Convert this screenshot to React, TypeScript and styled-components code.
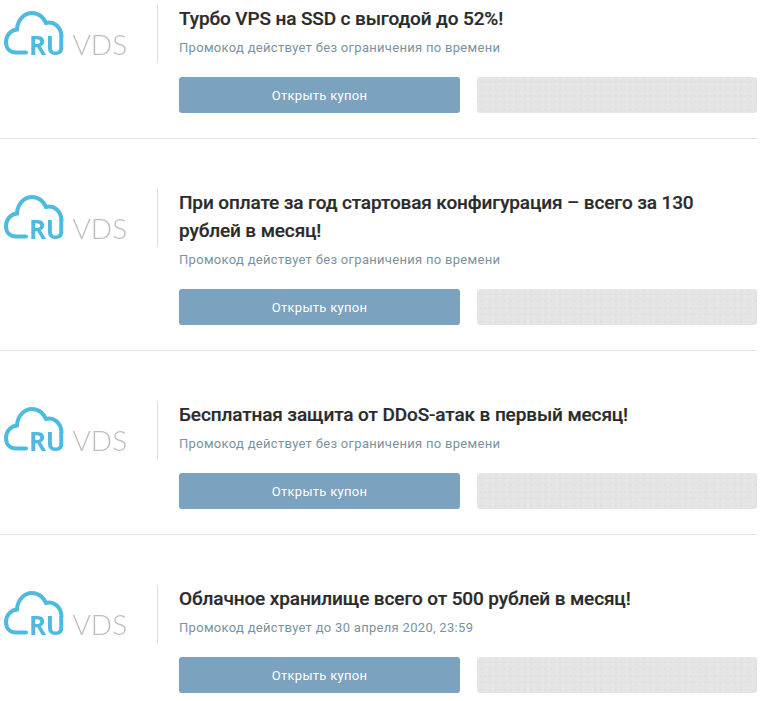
import React from "react";
import styled, { createGlobalStyle } from "styled-components";

const Global = createGlobalStyle`
  html, body { margin: 0; padding: 0; background: #fff; }
  body { font-family: Roboto, "Noto Sans", sans-serif; overflow: hidden; }
`;

const List = styled.div`
  width: 757px;
  padding-top: 5px;
`;

const Row = styled.article<{ $first?: boolean }>`
  display: flex;
  padding: ${(p) => (p.$first ? "0" : "50px")} 0 25px;
  border-bottom: 1px solid #dfe5e5;
  &:last-child { border-bottom: none; }
`;

const LogoCol = styled.div`
  flex: 0 0 158px;
  box-sizing: border-box;
  height: 58px;
  border-right: 1px solid #dcdcdc;
`;

const LogoSvg = styled.svg`
  display: block;
  width: 130px;
  height: 58px;
  filter: blur(0.4px);
`;

const Content = styled.div`
  flex: 1;
  margin-left: 21px;
  min-width: 0;
`;

const Title = styled.h2`
  margin: 0;
  font-size: 19px;
  line-height: 28px;
  font-weight: 500;
  letter-spacing: -0.12px;
  color: #2b2b2b;
  -webkit-text-stroke: 0.2px #2b2b2b;
`;

const Note = styled.p`
  margin: 5px 0 0;
  font-size: 13px;
  line-height: 20px;
  letter-spacing: 0.3px;
  color: #7b929f;
`;

const Actions = styled.div`
  display: flex;
  gap: 17px;
  margin-top: 19px;
`;

const OpenButton = styled.button`
  flex: 0 0 281px;
  height: 36px;
  padding: 1px 0 0;
  border: none;
  border-radius: 3px;
  background: #7ba2be;
  color: #fff;
  font-family: inherit;
  font-size: 13px;
  letter-spacing: 0.3px;
`;

const Coupon = styled.div`
  flex: 1;
  height: 36px;
  border-radius: 3px;
  background-color: #e4e4e4;
  background-image:
    radial-gradient(circle at 30% 40%, rgba(255,255,255,.12) 0 1px, transparent 2px),
    radial-gradient(circle at 70% 70%, rgba(0,0,0,.012) 0 1px, transparent 2px);
  background-size: 7px 5px, 5px 7px;
`;

const Logo = () => (
  <LogoSvg viewBox="0 0 130 58">
    <path
      d="M26 47.5 H16 C9 47.5 6 42.5 6 37 C6 30 11 25 17 24.5 C17.5 14 25 8 32 8 C39 8 44 13 46 18 C54 16 61 22 61.5 31"
      fill="none"
      stroke="#4fbadf"
      strokeWidth="4"
      strokeLinecap="round"
    />
    <text x="29" y="49.5" fontFamily="'Open Sans', sans-serif" fontWeight="700" fontSize="26" letterSpacing="-0.3" fill="#4fbadf">RU</text>
    <text x="72.5" y="50" fontFamily="Lato, 'Open Sans', sans-serif" fontWeight="300" fontSize="28" fill="#bdbdbd">VDS</text>
  </LogoSvg>
);

const offers = [
  { title: "Турбо VPS на SSD с выгодой до 52%!", note: "Промокод действует без ограничения по времени" },
  { title: "При оплате за год стартовая конфигурация – всего за 130 рублей в месяц!", note: "Промокод действует без ограничения по времени" },
  { title: "Бесплатная защита от DDoS-атак в первый месяц!", note: "Промокод действует без ограничения по времени" },
  { title: "Облачное хранилище всего от 500 рублей в месяц!", note: "Промокод действует до 30 апреля 2020, 23:59" },
];

export default function App() {
  return (
    <>
      <Global />
      <List>
        {offers.map((o, i) => (
          <Row key={i} $first={i === 0}>
            <LogoCol><Logo /></LogoCol>
            <Content>
              <Title>{o.title}</Title>
              <Note>{o.note}</Note>
              <Actions>
                <OpenButton>Открыть купон</OpenButton>
                <Coupon />
              </Actions>
            </Content>
          </Row>
        ))}
      </List>
    </>
  );
}
